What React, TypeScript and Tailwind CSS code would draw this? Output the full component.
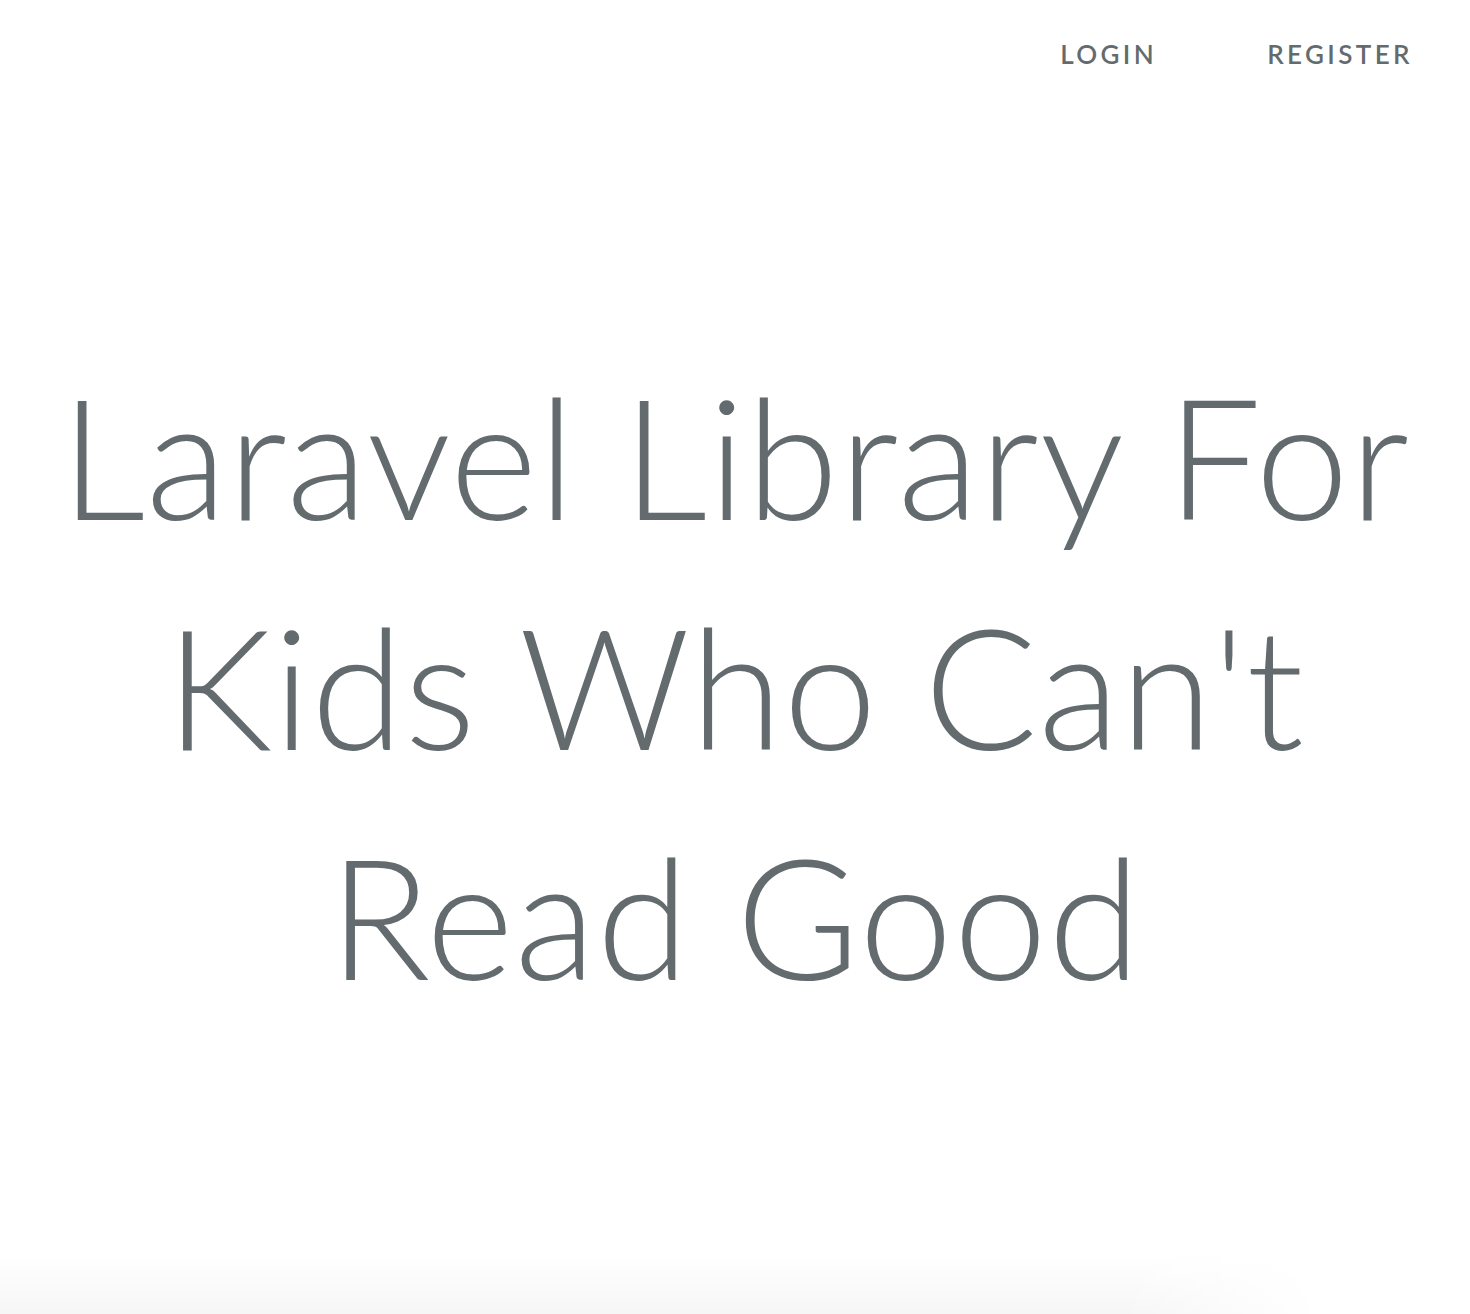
export default function App() {
  const links = ['Login', 'Register']

  return (
    <div className="relative h-[1314px] w-full overflow-hidden bg-white text-[#636b6f] [font-family:Lato,'Noto_Sans',sans-serif]">
      <div className="absolute right-[20px] top-[41px] flex">
        {links.map((l) => (
          <a
            key={l}
            href="#"
            className="px-[55px] text-[26px] font-semibold uppercase leading-none tracking-[3.4px] text-[#636b6f] last:pr-[37px]"
          >
            {l}
          </a>
        ))}
      </div>

      <div className="flex flex-col items-center pt-[340px]">
        <h1 className="text-center text-[168px] font-light leading-[230px] tracking-[0.7px]">
          Laravel Library For
          <br />
          Kids Who Can't
          <br />
          Read Good
        </h1>
      </div>

      <div className="absolute bottom-0 left-0 h-[60px] w-[1320px] bg-gradient-to-b from-white to-[#f6f6f6] [mask-image:linear-gradient(to_right,black_85%,transparent)]" />
    </div>
  )
}
